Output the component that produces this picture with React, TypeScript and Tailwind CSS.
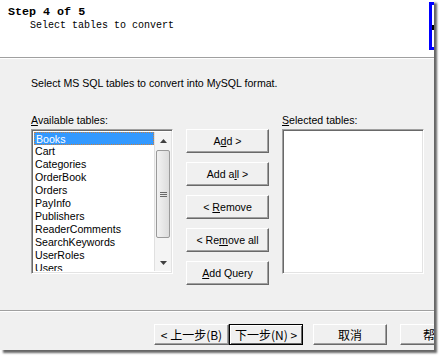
import React from 'react';

const TABLES = [
  'Books',
  'Cart',
  'Categories',
  'OrderBook',
  'Orders',
  'PayInfo',
  'Publishers',
  'ReaderComments',
  'SearchKeywords',
  'UserRoles',
  'Users',
];

const ui = "font-['Liberation_Sans',Tahoma,sans-serif] text-[10.6px] leading-[13px] text-black";
const cjk = "font-['Noto_Sans_CJK_SC','Liberation_Sans',sans-serif] text-[12px] text-black";

// classic raised 3D button
const raised =
  'flex items-center justify-center bg-[#f0f0f0] border border-t-white border-l-white border-r-[#696969] border-b-[#696969] shadow-[inset_-1px_-1px_0_#a0a0a0]';

// sunken list box frame
const sunken =
  'bg-white border border-t-[#a0a0a0] border-l-[#a0a0a0] border-r-white border-b-white shadow-[inset_1px_1px_0_#696969,inset_-1px_-1px_0_#e3e3e3]';

const Btn: React.FC<{ children: React.ReactNode }> = ({ children }) => (
  <div className={`${raised} ${ui} w-[83px] h-[24px] whitespace-pre`}>{children}</div>
);

const ScrollBar: React.FC = () => (
  <div className="w-[17px] h-full flex flex-col bg-[#f4f4f4] border-l border-[#e0e0e0]">
    <div className="h-[17px] flex items-center justify-center">
      <svg width="7" height="4" viewBox="0 0 7 4">
        <path d="M3.5 0 L7 4 L0 4 Z" fill="#404040" />
      </svg>
    </div>
    <div className="h-[1px]" />
    <div className="mx-[1px] h-[88px] rounded-[2px] border border-[#9a9a9a] bg-gradient-to-r from-[#f2f2f2] to-[#dcdcdc] flex flex-col items-center justify-center gap-[1px]">
      <div className="w-[7px] h-px bg-[#6a6a6a]" />
      <div className="w-[7px] h-px bg-[#6a6a6a]" />
      <div className="w-[7px] h-px bg-[#6a6a6a]" />
    </div>
    <div className="flex-1" />
    <div className="h-[17px] flex items-center justify-center">
      <svg width="7" height="4" viewBox="0 0 7 4">
        <path d="M0 0 L7 0 L3.5 4 Z" fill="#404040" />
      </svg>
    </div>
  </div>
);

export default function App() {
  return (
    <div className="w-[439px] h-[356px] bg-white overflow-hidden">
      <div className="w-[434px] h-[350px] flex flex-col bg-[#f0f0f0] overflow-hidden shadow-[3px_3px_2px_rgba(0,0,0,0.6)]">
        {/* Header */}
        <div className="h-[57px] bg-white flex justify-between shrink-0">
          <div className="pl-[8px] pt-[5px] font-['Liberation_Mono',monospace] text-black">
            <div className="text-[11.7px] leading-[14px] font-bold">Step 4 of 5</div>
            <div className="pl-[22px] pt-[1px] text-[10px] leading-[12px]">Select tables to convert</div>
          </div>
          <div className="mt-[2px] w-[5px] h-[48px] border-[3px] border-r-0 border-[#0000ff] bg-white flex items-center">
            <div className="w-[2px] h-[5px] bg-black mt-[2px]" />
          </div>
        </div>
        <div className="h-px bg-[#a0a0a0] shrink-0" />
        <div className="h-px bg-white shrink-0" />

        {/* Body */}
        <div className="h-[251px] shrink-0 pl-[31px] pt-[18px]">
          <div className={ui}>Select MS SQL tables to convert into MySQL format.</div>

          <div className="flex mt-[24px]">
            <div className="flex flex-col">
              <div className={`${ui} h-[15px]`}>
                <span className="underline">A</span>vailable tables:
              </div>
              <div className={`${sunken} w-[142px] h-[145px] p-[2px] pr-[1px] flex`}>
                <div className="flex-1 overflow-hidden">
                  {TABLES.map((t, i) => (
                    <div
                      key={t}
                      className={`${ui} h-[13px] pl-[1px] ${
                        i === 0
                          ? 'bg-[#3399ff] text-white border border-dotted border-[#c88040] leading-[11px] pl-0'
                          : ''
                      }`}
                    >
                      {t}
                    </div>
                  ))}
                </div>
                <ScrollBar />
              </div>
            </div>

            <div className="ml-[13px] pt-[15px] flex flex-col gap-[9px]">
              <Btn>
                A<span className="underline">d</span>d{' >'}
              </Btn>
              <Btn>
                Add a<span className="underline">l</span>l{' >'}
              </Btn>
              <Btn>
                {'< '}<span className="underline">R</span>emove
              </Btn>
              <Btn>
                {'< Re'}<span className="underline">m</span>ove all
              </Btn>
              <Btn>
                <span className="underline">A</span>dd Query
              </Btn>
            </div>

            <div className="ml-[13px] flex flex-col">
              <div className={`${ui} h-[15px]`}>
                <span className="underline">S</span>elected tables:
              </div>
              <div className={`${sunken} w-[142px] h-[145px]`} />
            </div>
          </div>
        </div>

        <div className="h-px bg-[#a0a0a0] shrink-0" />
        <div className="h-px bg-white shrink-0" />

        {/* Footer buttons */}
        <div className="flex-1 flex items-start pt-[12px] pl-[154px]">
          <div className={`${raised} ${cjk} w-[75px] h-[21px] shrink-0 whitespace-pre`}>{'< 上一步(B)'}</div>
          <div className={`${cjk} w-[74px] h-[21px] shrink-0 whitespace-pre flex items-center justify-center bg-[#f0f0f0] border border-black shadow-[inset_1px_1px_0_white,inset_-1px_-1px_0_#696969]`}>
            {'下一步(N) >'}
          </div>
          <div className={`${raised} ${cjk} ml-[10px] w-[74px] h-[21px] shrink-0`}>取消</div>
          <div className={`${raised} ${cjk} ml-[13px] w-[74px] h-[21px] shrink-0 justify-start pl-[22px]`}>帮助</div>
        </div>
      </div>
    </div>
  );
}
